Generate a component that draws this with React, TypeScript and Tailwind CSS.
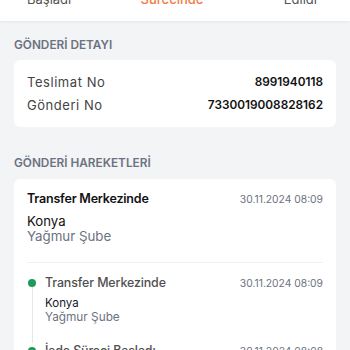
import React from "react";

const font = { fontFamily: "Inter, 'Noto Sans', sans-serif" };

function TimelineItem({ title, date, city, branch, last }: { title: string; date: string; city: string; branch: string; last?: boolean }) {
  return (
    <div className="flex">
      <div className="flex flex-col items-center w-[8px] ml-[1px] mr-[9px]">
        <div className="w-[8px] h-[8px] rounded-full bg-[#1e9a5c] mt-[4px] shrink-0" />
        {!last && <div className="w-px flex-1 bg-[#e5e7eb]" />}
      </div>
      <div className="flex-1 pb-[18.5px]">
        <div className="flex justify-between items-start">
          <div className="text-[12.4px] leading-[16px] font-medium text-[#505050] tracking-[-0.1px]">{title}</div>
          <div className="text-[10.3px] leading-[14px] pt-[1px] text-[#6b7280]">{date}</div>
        </div>
        <div className="mt-[5px] text-[11.5px] leading-[14px] text-[#111827]">{city}</div>
        <div className="text-[11.8px] leading-[14px] text-[#6b7280]">{branch}</div>
      </div>
    </div>
  );
}

export default function App() {
  return (
    <div className="w-[350px] h-[350px] overflow-hidden bg-[#f3f4f6]" style={font}>
      <div className="bg-white h-[21px] overflow-hidden shadow-[0_1px_3px_rgba(0,0,0,0.06)] relative">
        <div className="grid grid-cols-3 pl-[27px] pr-[33px] -mt-[9px] text-[13px] leading-[16px]">
          <div className="text-left text-[#555555]">Başladı</div>
          <div className="text-center text-[#f27a42] font-medium">Sürecinde</div>
          <div className="text-right text-[#555555]">Edildi</div>
        </div>
      </div>

      <div className="px-[14px]">
        <div className="pt-[16.5px] pb-[8.5px] text-[11.8px] leading-[14px] font-semibold text-[#6b7280]">GÖNDERİ DETAYI</div>
        <div className="bg-white rounded-[6px] px-[13px] pt-[13.5px] pb-[13.7px] flex flex-col gap-[7.5px]">
          <div className="flex justify-between items-center leading-[16px]">
            <span className="text-[13px] tracking-[0.55px] text-[#444444]">Teslimat No</span>
            <span className="text-[11.8px] font-semibold text-[#111111]">8991940118</span>
          </div>
          <div className="flex justify-between items-center leading-[16px]">
            <span className="text-[13px] tracking-[0.55px] text-[#444444]">Gönderi No</span>
            <span className="text-[11.8px] font-semibold text-[#111111]">7330019008828162</span>
          </div>
        </div>

        <div className="pt-[29.8px] pb-[8.8px] text-[11.8px] leading-[14px] font-semibold text-[#6b7280]">GÖNDERİ HAREKETLERİ</div>
        <div className="bg-white rounded-[6px] px-[13px] pt-[12px]">
          <div className="pb-[18px] border-b border-[#f0f1f3]">
            <div className="flex justify-between items-start">
              <div className="text-[12.5px] leading-[16px] font-semibold tracking-[-0.2px] text-[#111111]">Transfer Merkezinde</div>
              <div className="text-[10.3px] leading-[14px] pt-[1px] text-[#6b7280]">30.11.2024 08:09</div>
            </div>
            <div className="mt-[7px] text-[13.2px] leading-[15px] text-[#111111]">Konya</div>
            <div className="text-[13.3px] leading-[15px] text-[#6b7280]">Yağmur Şube</div>
          </div>
          <div className="pt-[12px]">
            <TimelineItem title="Transfer Merkezinde" date="30.11.2024 08:09" city="Konya" branch="Yağmur Şube" />
            <TimelineItem title="İade Süreci Başladı" date="30.11.2024 08:08" city="Konya" branch="Yağmur Şube" />
          </div>
        </div>
      </div>
    </div>
  );
}
